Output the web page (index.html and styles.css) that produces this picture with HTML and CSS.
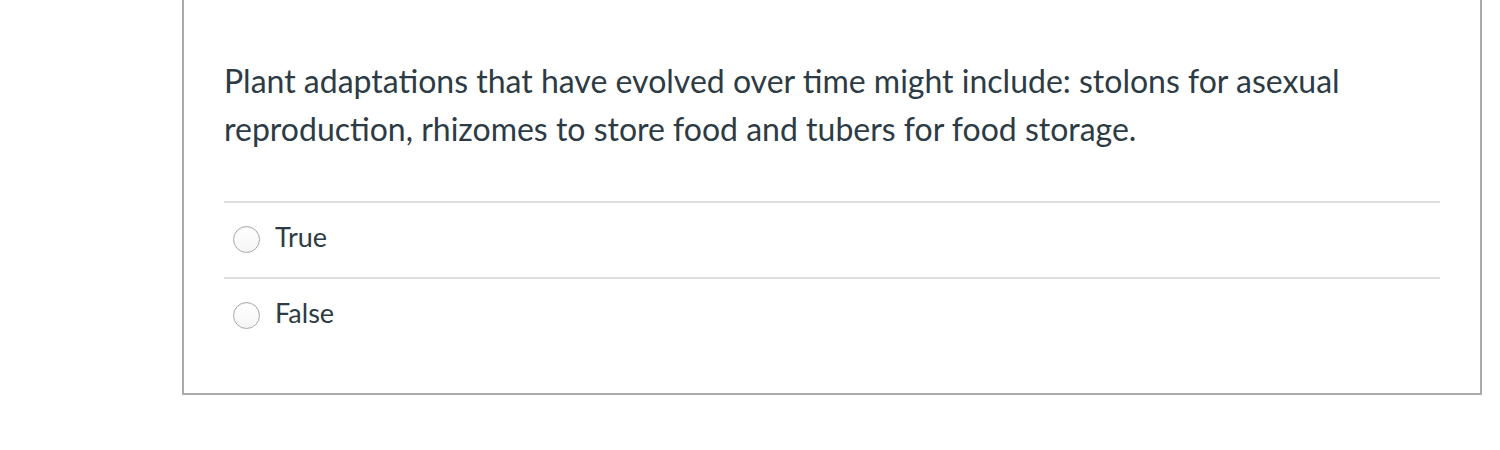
FILE: index.html
```html
<!DOCTYPE html>
<html>
<head>
<meta charset="utf-8">
<link rel="stylesheet" href="styles.css">
</head>
<body>
<div class="quiz">
  <div class="question">Plant adaptations that have evolved over time might include: stolons for asexual reproduction, rhizomes to store food and tubers for food storage.</div>
  <div class="answers">
    <label class="answer"><span class="radio"></span><span class="label">True</span></label>
    <label class="answer"><span class="radio"></span><span class="label">False</span></label>
  </div>
</div>
</body>
</html>
```
FILE: styles.css
```css
html, body {
  margin: 0;
  padding: 0;
  background: #fff;
}
body {
  font-family: Lato, "Noto Sans", sans-serif;
  color: #2d3b45;
}
.quiz {
  box-sizing: border-box;
  width: 1300px;
  margin: -10px 0 0 182px;
  border: 2px solid #aaaaaa;
  padding: 65px 40px 40px 40px;
}
.question {
  font-size: 32px;
  line-height: 48px;
  padding-bottom: 48px;
}
.answers {
  display: flex;
  flex-direction: column;
}
.answer {
  box-sizing: border-box;
  display: flex;
  align-items: center;
  height: 76px;
  border-top: 2px solid #dddddd;
  padding: 0 0 7px 9px;
}
.radio {
  box-sizing: border-box;
  width: 27px;
  height: 27px;
  border-radius: 50%;
  border: 1px solid #a8a8a8;
  background: linear-gradient(#ffffff, #f5f5f5);
  box-shadow: inset 0 1px 1px rgba(0,0,0,0.06);
  margin-right: 15px;
  margin-top: 6px;
}
.label {
  font-size: 27px;
}
```
